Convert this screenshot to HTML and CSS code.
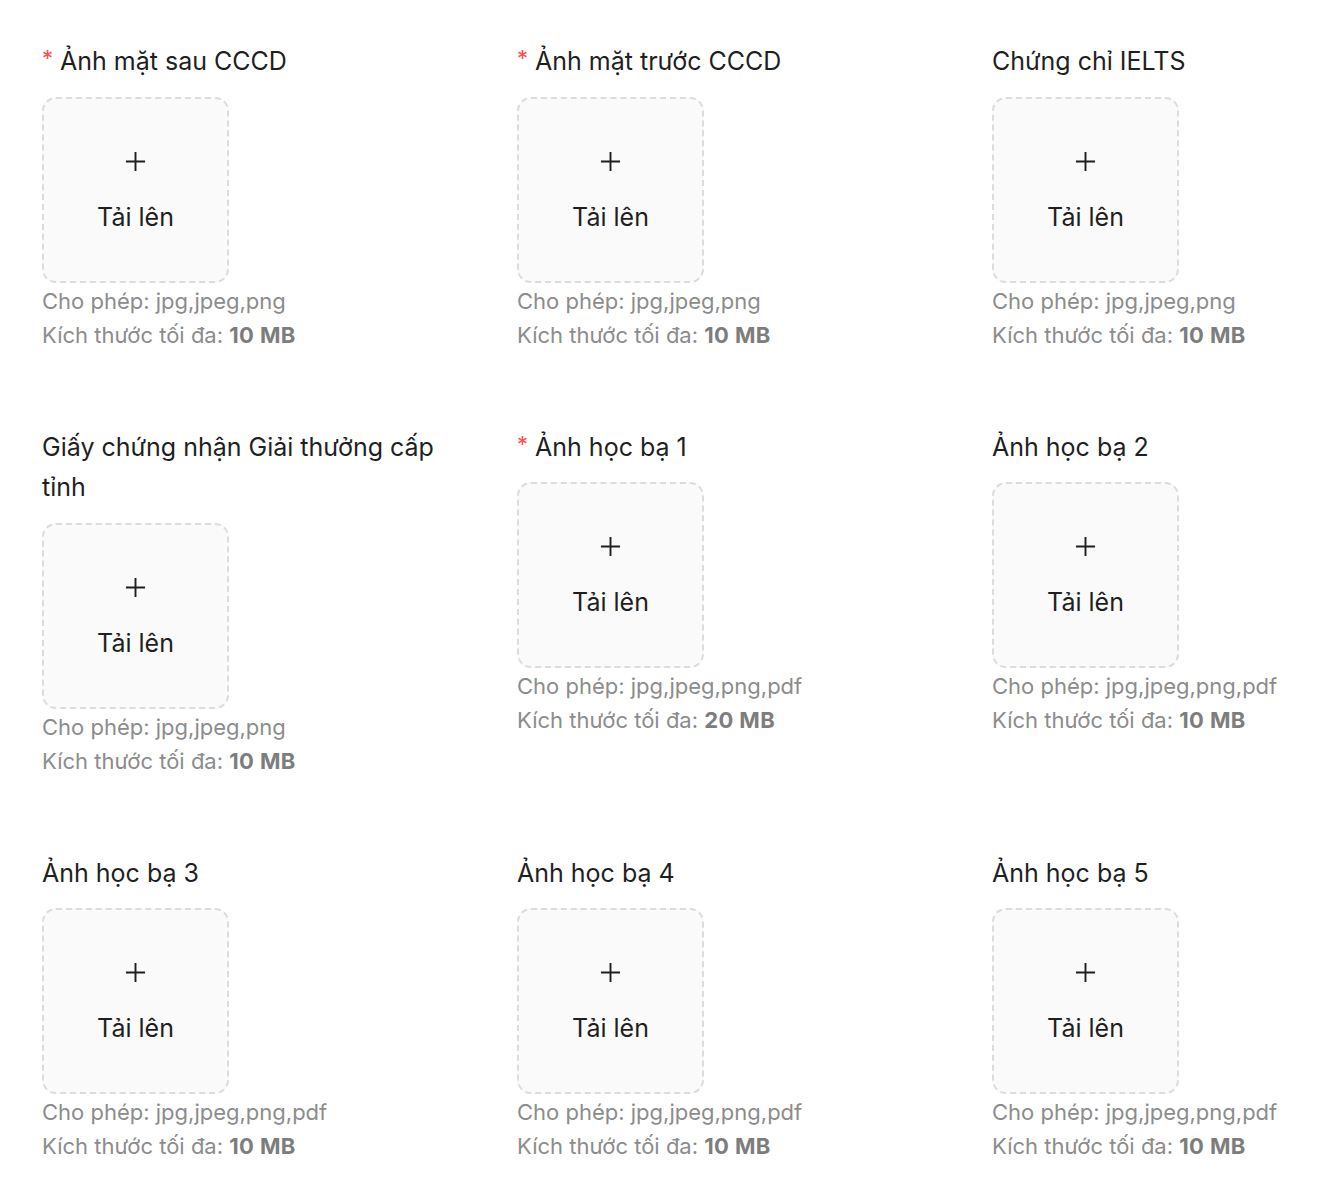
FILE: index.html
```html
<!DOCTYPE html>
<html lang="vi">
<head>
<meta charset="utf-8">
<title>Upload</title>
<link rel="stylesheet" href="styles.css">
</head>
<body>
<div class="grid">
  <div class="item">
    <div class="label"><span class="req">*</span>Ảnh mặt sau CCCD</div>
    <div class="card"><svg class="plus" viewBox="0 0 22 22"><path d="M11 1v20M1 11h20"/></svg><div class="cap">Tải lên</div></div>
    <div class="hint">Cho phép: jpg,jpeg,png</div>
    <div class="hint">Kích thước tối đa: <b>10 MB</b></div>
  </div>
  <div class="item">
    <div class="label"><span class="req">*</span>Ảnh mặt trước CCCD</div>
    <div class="card"><svg class="plus" viewBox="0 0 22 22"><path d="M11 1v20M1 11h20"/></svg><div class="cap">Tải lên</div></div>
    <div class="hint">Cho phép: jpg,jpeg,png</div>
    <div class="hint">Kích thước tối đa: <b>10 MB</b></div>
  </div>
  <div class="item">
    <div class="label">Chứng chỉ IELTS</div>
    <div class="card"><svg class="plus" viewBox="0 0 22 22"><path d="M11 1v20M1 11h20"/></svg><div class="cap">Tải lên</div></div>
    <div class="hint">Cho phép: jpg,jpeg,png</div>
    <div class="hint">Kích thước tối đa: <b>10 MB</b></div>
  </div>

  <div class="item">
    <div class="label">Giấy chứng nhận Giải thưởng cấp tỉnh</div>
    <div class="card"><svg class="plus" viewBox="0 0 22 22"><path d="M11 1v20M1 11h20"/></svg><div class="cap">Tải lên</div></div>
    <div class="hint">Cho phép: jpg,jpeg,png</div>
    <div class="hint">Kích thước tối đa: <b>10 MB</b></div>
  </div>
  <div class="item">
    <div class="label"><span class="req">*</span>Ảnh học bạ 1</div>
    <div class="card"><svg class="plus" viewBox="0 0 22 22"><path d="M11 1v20M1 11h20"/></svg><div class="cap">Tải lên</div></div>
    <div class="hint">Cho phép: jpg,jpeg,png,pdf</div>
    <div class="hint">Kích thước tối đa: <b>20 MB</b></div>
  </div>
  <div class="item">
    <div class="label">Ảnh học bạ 2</div>
    <div class="card"><svg class="plus" viewBox="0 0 22 22"><path d="M11 1v20M1 11h20"/></svg><div class="cap">Tải lên</div></div>
    <div class="hint">Cho phép: jpg,jpeg,png,pdf</div>
    <div class="hint">Kích thước tối đa: <b>10 MB</b></div>
  </div>

  <div class="item">
    <div class="label">Ảnh học bạ 3</div>
    <div class="card"><svg class="plus" viewBox="0 0 22 22"><path d="M11 1v20M1 11h20"/></svg><div class="cap">Tải lên</div></div>
    <div class="hint">Cho phép: jpg,jpeg,png,pdf</div>
    <div class="hint">Kích thước tối đa: <b>10 MB</b></div>
  </div>
  <div class="item">
    <div class="label">Ảnh học bạ 4</div>
    <div class="card"><svg class="plus" viewBox="0 0 22 22"><path d="M11 1v20M1 11h20"/></svg><div class="cap">Tải lên</div></div>
    <div class="hint">Cho phép: jpg,jpeg,png,pdf</div>
    <div class="hint">Kích thước tối đa: <b>10 MB</b></div>
  </div>
  <div class="item">
    <div class="label">Ảnh học bạ 5</div>
    <div class="card"><svg class="plus" viewBox="0 0 22 22"><path d="M11 1v20M1 11h20"/></svg><div class="cap">Tải lên</div></div>
    <div class="hint">Cho phép: jpg,jpeg,png,pdf</div>
    <div class="hint">Kích thước tối đa: <b>10 MB</b></div>
  </div>
</div>
</body>
</html>
```

FILE: styles.css
```css
html, body {
  margin: 0;
  padding: 0;
  background: #ffffff;
}
body {
  font-family: Inter, "Noto Sans", "Liberation Sans", sans-serif;
  color: #1f1f1f;
}
.grid {
  display: grid;
  grid-template-columns: 435px 435px 1fr;
  column-gap: 40px;
  row-gap: 75px;
  padding: 41px 0 40px 42px;
}
.item {
  display: flex;
  flex-direction: column;
  align-items: flex-start;
}
.label {
  font-size: 25px;
  line-height: 40.5px;
  margin-bottom: 15px;
}
.req {
  color: #ff4d4f;
  font-size: 22px;
  margin-right: 7px;
  display: inline-block;
  vertical-align: top;
  line-height: 34px;
}
.card {
  box-sizing: border-box;
  width: 187px;
  height: 186px;
  background: #fafafa;
  border: 2px dashed #dcdcdc;
  border-radius: 14px;
  display: flex;
  flex-direction: column;
  align-items: center;
  padding-top: 52px;
  margin-bottom: 1px;
}
.plus {
  width: 21px;
  height: 21px;
  stroke: #1f1f1f;
  stroke-width: 2;
  fill: none;
}
.cap {
  font-size: 25px;
  line-height: 40px;
  margin-top: 25px;
}
.hint {
  font-size: 22px;
  line-height: 34px;
  color: #8c8c8c;
}
.hint b {
  font-weight: 700;
  color: #7d7d7d;
  letter-spacing: 0.4px;
}
```
